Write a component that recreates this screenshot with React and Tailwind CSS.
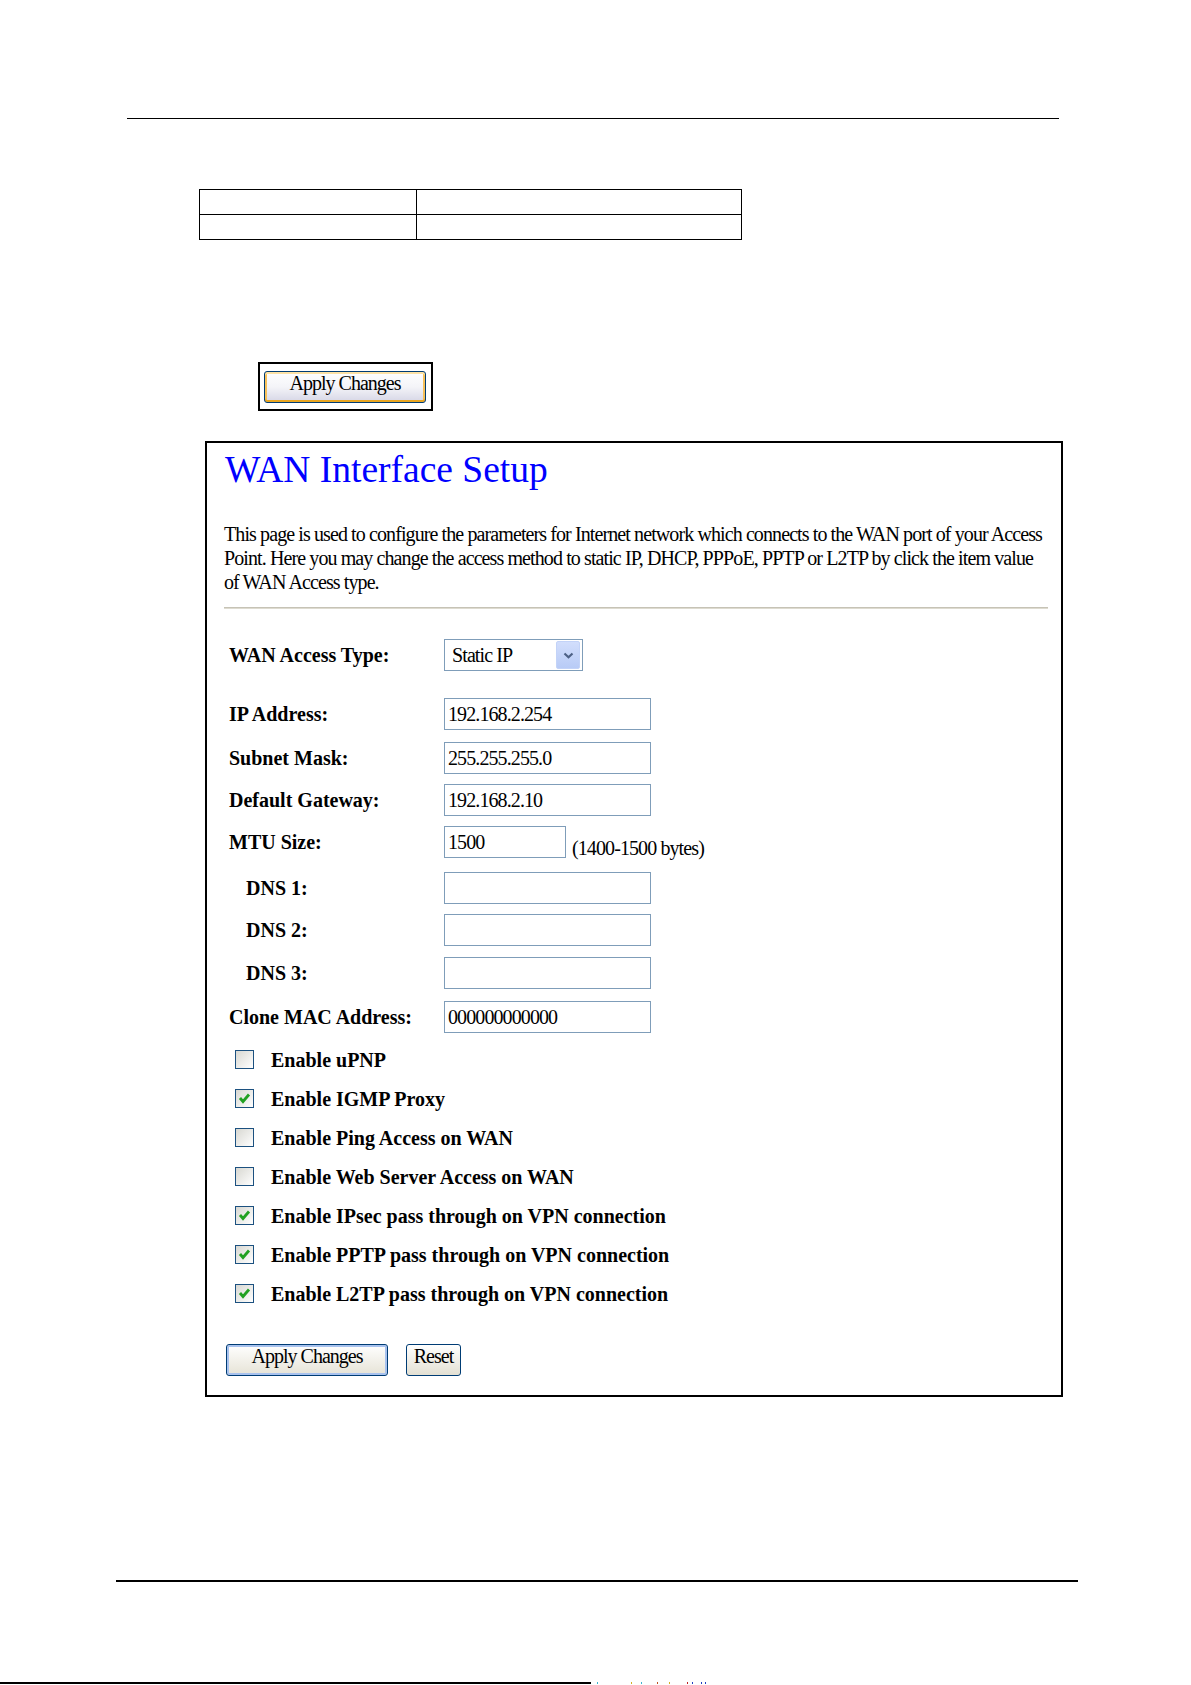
import React from "react";

function Chevron() {
  return (
    <svg width="11" height="7" viewBox="0 0 11 7">
      <polyline points="1.5,1.5 5.5,5.2 9.5,1.5" fill="none" stroke="#4d6185" strokeWidth="2.2" />
    </svg>
  );
}

function TextBox({ w, value }) {
  return (
    <div className={`${w} h-[32px] border border-[#7f9db9] bg-white flex items-center pl-[3px] text-[20px] tracking-[-0.9px] leading-[22px] whitespace-nowrap`}>
      {value}
    </div>
  );
}

function Row({ mt, indent, label, children }) {
  return (
    <div className={`flex items-center h-[32px] ${mt}`}>
      <div className={`w-[220px] shrink-0 font-bold text-[20px] leading-[22px] whitespace-nowrap ${indent ? "pl-[22px]" : "pl-[5px]"}`}>
        {label}
      </div>
      {children}
    </div>
  );
}

function Check({ checked, label }) {
  return (
    <div className="flex items-center h-[20px] pl-[11px]">
      <div className="w-[19px] h-[19px] border border-[#1c5180] bg-linear-to-br from-[#d8d8d2] to-white flex items-center justify-center shrink-0">
        {checked && (
          <svg width="15" height="15" viewBox="0 0 15 15">
            <polyline points="3,7 6,10.5 12,3.5" fill="none" stroke="#21a121" strokeWidth="2.8" />
          </svg>
        )}
      </div>
      <div className="ml-[17px] font-bold text-[20px] leading-[20px] whitespace-nowrap pt-[2px]">{label}</div>
    </div>
  );
}

export default function App() {
  const checks = [
    { c: false, l: "Enable uPNP" },
    { c: true, l: "Enable IGMP Proxy" },
    { c: false, l: "Enable Ping Access on WAN" },
    { c: false, l: "Enable Web Server Access on WAN" },
    { c: true, l: "Enable IPsec pass through on VPN connection" },
    { c: true, l: "Enable PPTP pass through on VPN connection" },
    { c: true, l: "Enable L2TP pass through on VPN connection" },
  ];

  return (
    <div className="w-[1191px] h-[1685px] bg-white overflow-hidden text-black font-['Liberation_Serif','Times_New_Roman',serif]">
      <div className="pt-[118px] flex flex-col items-start">
        {/* top rule */}
        <div className="ml-[127px] w-[932px] h-px bg-black" />

        {/* empty table */}
        <div className="ml-[199px] mt-[70px] w-[543px] border border-black grid grid-cols-[217px_1fr]">
          <div className="h-[25px] border-r border-b border-black" />
          <div className="h-[25px] border-b border-black" />
          <div className="h-[24px] border-r border-black" />
          <div className="h-[24px]" />
        </div>

        {/* Apply changes (hover) picture */}
        <div className="ml-[258px] mt-[122px] w-[175px] h-[49px] border-2 border-black bg-white pt-[7px] pl-[4px]">
          <div className="w-[162px] h-[32px] rounded-[3px] border border-[#003c74] bg-linear-to-b from-white via-[#f4f4f8] to-[#d6d6e6] shadow-[inset_0_2px_0_#fde2a6,inset_0_-2px_0_#e8a521,inset_2px_0_0_#f7c15a,inset_-2px_0_0_#f7c15a] flex justify-center items-start">
            <span className="text-[20px] leading-[22px] tracking-[-1px]">Apply Changes</span>
          </div>
        </div>

        {/* main box */}
        <div className="ml-[205px] mt-[30px] w-[858px] h-[956px] border-2 border-black pl-[17px] pr-[13px] flex flex-col items-stretch">
          <h1 className="mt-[6px] text-[37.5px] leading-[41px] text-[#0000ff] whitespace-nowrap ml-[1px]">WAN Interface Setup</h1>

          <p className="mt-[32px] text-[20px] leading-[24px] tracking-[-0.9px] whitespace-nowrap">
            This page is used to configure the parameters for Internet network which connects to the WAN port of your Access
            <br />
            Point. Here you may change the access method to static IP, DHCP, PPPoE, PPTP or L2TP by click the item value
            <br />
            of WAN Access type.
          </p>

          <div className="mt-[13px] h-[2px] bg-[#c6c3b6] border-b border-[#dedbd0]" />

          <Row mt="mt-[30px]" label="WAN Access Type:">
            <div className="w-[139px] h-[32px] border border-[#7f9db9] bg-white flex items-center justify-between pl-[7px] pr-[2px]">
              <span className="text-[20px] leading-[22px] tracking-[-0.9px]">Static IP</span>
              <div className="w-[24px] h-[28px] rounded-[2px] bg-linear-to-b from-[#d2defc] to-[#b8cbf6] border border-[#c3d3f8] flex items-center justify-center">
                <Chevron />
              </div>
            </div>
          </Row>

          <Row mt="mt-[27px]" label="IP Address:">
            <TextBox w="w-[207px]" value="192.168.2.254" />
          </Row>
          <Row mt="mt-[12px]" label="Subnet Mask:">
            <TextBox w="w-[207px]" value="255.255.255.0" />
          </Row>
          <Row mt="mt-[10px]" label="Default Gateway:">
            <TextBox w="w-[207px]" value="192.168.2.10" />
          </Row>
          <div className="flex h-[32px] mt-[10px]">
            <div className="w-[220px] shrink-0 pl-[5px] font-bold text-[20px] leading-[22px] self-center">MTU Size:</div>
            <TextBox w="w-[122px]" value="1500" />
            <span className="ml-[6px] self-end text-[20px] leading-[22px] tracking-[-0.9px] whitespace-nowrap translate-y-[1px]">(1400-1500 bytes)</span>
          </div>
          <Row mt="mt-[14px]" indent label="DNS 1:">
            <TextBox w="w-[207px]" value="" />
          </Row>
          <Row mt="mt-[10px]" indent label="DNS 2:">
            <TextBox w="w-[207px]" value="" />
          </Row>
          <Row mt="mt-[11px]" indent label="DNS 3:">
            <TextBox w="w-[207px]" value="" />
          </Row>
          <Row mt="mt-[12px]" label="Clone MAC Address:">
            <TextBox w="w-[207px]" value="000000000000" />
          </Row>

          <div className="mt-[16px] flex flex-col gap-[19px]">
            {checks.map((k) => (
              <Check key={k.l} checked={k.c} label={k.l} />
            ))}
          </div>

          <div className="mt-[41px] ml-[2px] flex items-start gap-[18px]">
            <div className="w-[162px] h-[32px] rounded-[3px] border border-[#003c74] bg-linear-to-b from-white to-[#e6e3d6] shadow-[inset_0_0_0_2px_#a8c2ee] flex justify-center items-start">
              <span className="text-[20px] leading-[22px] tracking-[-1px]">Apply Changes</span>
            </div>
            <div className="w-[55px] h-[32px] rounded-[3px] border border-[#003c74] bg-linear-to-b from-white to-[#e3e0d3] flex justify-center items-start">
              <span className="text-[20px] leading-[22px] tracking-[-1px]">Reset</span>
            </div>
          </div>
        </div>

        {/* bottom rule */}
        <div className="ml-[116px] mt-[183px] w-[962px] h-[2px] bg-black" />

        {/* footer strip */}
        <div className="mt-[100px] flex items-end">
          <div className="w-[591px] h-[2px] bg-black" />
          <svg width="120" height="2" viewBox="0 0 120 2" className="ml-[6px]">
            <rect x="0" y="0" width="1" height="2" fill="#3cb4d0" />
            <rect x="34" y="0" width="1" height="2" fill="#d4b020" />
            <rect x="44" y="0" width="1" height="2" fill="#3cb4d0" />
            <rect x="60" y="0" width="1" height="2" fill="#c05020" />
            <rect x="72" y="0" width="1" height="2" fill="#d4b020" />
            <rect x="90" y="0" width="1" height="2" fill="#c02020" />
            <rect x="95" y="0" width="1" height="2" fill="#2040c0" />
            <rect x="104" y="0" width="1" height="2" fill="#2040c0" />
            <rect x="108" y="0" width="1" height="2" fill="#2040c0" />
          </svg>
        </div>
      </div>
    </div>
  );
}
